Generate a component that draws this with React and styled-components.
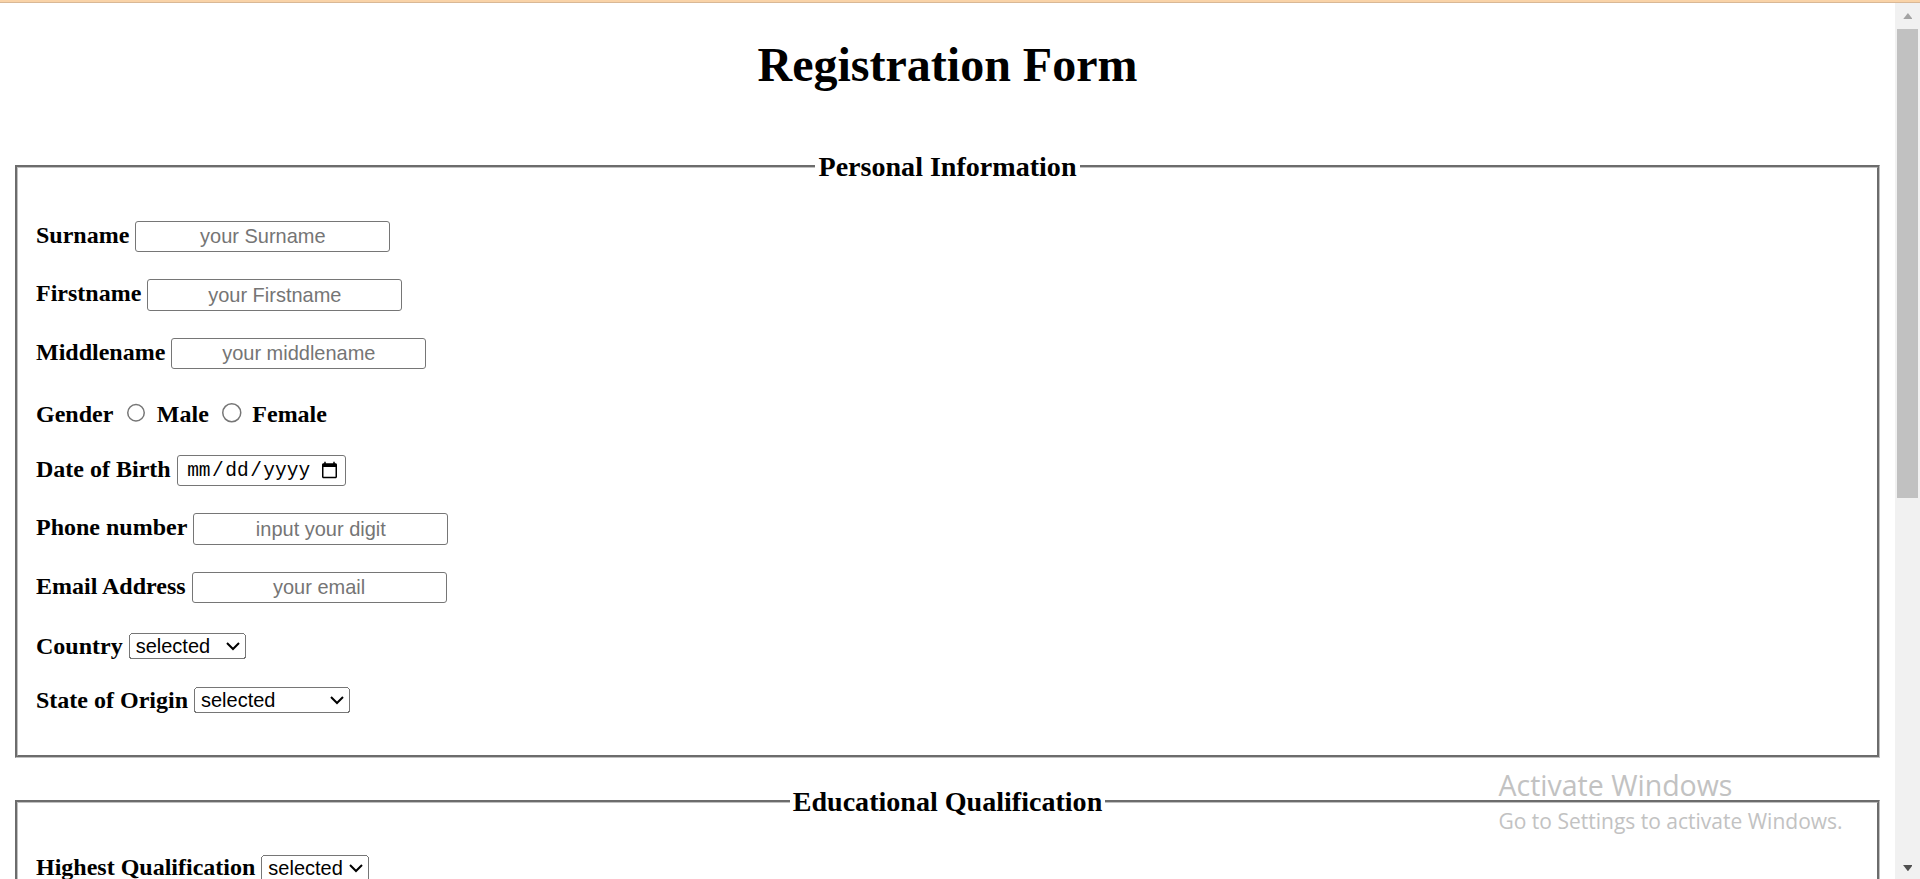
import styled, { createGlobalStyle } from "styled-components";

const GlobalStyle = createGlobalStyle`
  html, body {
    margin: 0;
    padding: 0;
    background: #ffffff;
    overflow: hidden;
  }
  body {
    font-family: "Liberation Serif", "Times New Roman", serif;
    color: #000000;
  }
`;

// the screenshot was taken at 150% browser zoom, so everything below is in 1x css px
const Screen = styled.div`
  zoom: 1.5;
  position: relative;
  width: 1280px;
  height: 586px;
  display: flex;
  flex-direction: column;
  overflow: hidden;
  background: #ffffff;
`;

const TopBar = styled.div`
  flex: none;
  height: 2px;
  background: linear-gradient(#f9d3a8 0 62%, #d9b896 62% 100%);
`;

const Viewport = styled.div`
  flex: 1;
  min-height: 0;
  display: flex;
`;

const Page = styled.div`
  flex: 1;
  min-width: 0;
  padding: 0 8px;
  overflow: hidden;
`;

const Title = styled.h1`
  margin: 22.7px 0 20.1px;
  font-size: 32px;
  line-height: 37px;
  font-weight: bold;
  text-align: center;
`;

const Section = styled.fieldset`
  margin: 0 2px;
  padding: 4.5px 12px 26.4px;
  border: 2px groove #c0c0c0;
`;

const Legend = styled.legend`
  margin: 0 auto;
  padding: 0 2px;
`;

const LegendTitle = styled.h3`
  margin: 18.75px 0;
  font-size: 18.72px;
  line-height: 21.5px;
  font-weight: bold;
`;

// $h - row height, $top - space above the row
const Row = styled.div`
  display: flex;
  align-items: center;
  gap: 4px;
  height: ${(p) => p.$h || 23}px;
  margin-top: ${(p) => p.$top ?? 16}px;
`;

const Label = styled.label`
  font-size: 16px;
  line-height: 18px;
  font-weight: bold;
  white-space: nowrap;
`;

const TextInput = styled.input`
  box-sizing: border-box;
  width: 170px;
  height: 21px;
  margin: 2px 0 0;
  padding: 1px 2px;
  border: 1px solid #767676;
  border-radius: 2px;
  background: #ffffff;
  font: 13.33px "Liberation Sans", Arial, sans-serif;
  color: #000000;
  text-align: center;

  &::placeholder {
    color: #757575;
  }
`;

const DateInput = styled(TextInput)`
  width: 113px;
  font: 13px "Liberation Mono", "DejaVu Sans Mono", monospace;
`;

const Radio = styled.input`
  width: 13px;
  height: 13px;
  margin: 0 3px 2px 5px;
`;

const Select = styled.select`
  width: ${(p) => p.$w}px;
  height: 17px;
  font: 13.33px "Liberation Sans", Arial, sans-serif;
  color: #000000;
`;

const ScrollBar = styled.div`
  flex: none;
  width: 16.67px;
  display: flex;
  flex-direction: column;
  background: #f1f1f1;
`;

const ScrollButton = styled.div`
  flex: none;
  height: 17.33px;
  display: flex;
  align-items: center;
  justify-content: center;
  padding-top: ${(p) => (p.$down ? 3 : 0)}px;
  box-sizing: border-box;
`;

const Track = styled.div`
  flex: 1;
  padding: 0 1.1px;
`;

const Thumb = styled.div`
  height: 312.7px;
  background: #c1c1c1;
`;

const Watermark = styled.div`
  position: absolute;
  left: 999px;
  top: 510.6px;
  font-family: "Open Sans", "Noto Sans", sans-serif;
  color: #c2c2c2;
  pointer-events: none;
`;

const WatermarkTitle = styled.div`
  font-size: 19px;
  line-height: 26px;
`;

const WatermarkText = styled.div`
  margin-top: 1.2px;
  font-size: 14px;
  line-height: 19px;
`;

function Arrow({ down, color }) {
  return (
    <svg width="6.6" height="4.2" viewBox="0 0 14 9">
      <polygon points={down ? "0,0 14,0 7,9" : "7,0 14,9 0,9"} fill={color} />
    </svg>
  );
}

function App() {
  return (
    <>
      <GlobalStyle />
      <Screen>
        <TopBar />
        <Viewport>
          <Page>
            <Title>Registration Form</Title>

            <Section>
              <Legend>
                <LegendTitle>Personal Information</LegendTitle>
              </Legend>
              <Row $top={0}>
                <Label>Surname</Label>
                <TextInput type="text" placeholder="your Surname" />
              </Row>
              <Row>
                <Label>Firstname</Label>
                <TextInput type="text" placeholder="your Firstname" />
              </Row>
              <Row>
                <Label>Middlename</Label>
                <TextInput type="text" placeholder="your middlename" />
              </Row>
              <Row $top={18.4}>
                <Label>Gender</Label>
                <Radio type="radio" name="gender" value="male" />
                <Label>Male</Label>
                <Radio type="radio" name="gender" value="female" />
                <Label>Female</Label>
              </Row>
              <Row $top={13.6}>
                <Label>Date of Birth</Label>
                <DateInput type="date" />
              </Row>
              <Row>
                <Label>Phone number</Label>
                <TextInput type="tel" placeholder="input your digit" />
              </Row>
              <Row>
                <Label>Email Address</Label>
                <TextInput type="email" placeholder="your email" />
              </Row>
              <Row $h={20} $top={18.4}>
                <Label>Country</Label>
                <Select $w={78} defaultValue="">
                  <option value="">selected</option>
                  <option>Nigeria</option>
                  <option>Ghana</option>
                </Select>
              </Row>
              <Row $h={20}>
                <Label>State of Origin</Label>
                <Select $w={104} defaultValue="">
                  <option value="">selected</option>
                  <option>Lagos</option>
                  <option>Ogun</option>
                </Select>
              </Row>
            </Section>

            <Section>
              <Legend>
                <LegendTitle>Educational Qualification</LegendTitle>
              </Legend>
              <Row $h={20} $top={0}>
                <Label>Highest Qualification</Label>
                <Select $w={72} defaultValue="">
                  <option value="">selected</option>
                  <option>SSCE</option>
                  <option>OND</option>
                  <option>HND</option>
                  <option>BSc</option>
                </Select>
              </Row>
            </Section>
          </Page>

          <ScrollBar>
            <ScrollButton>
              <Arrow color="#a3a3a3" />
            </ScrollButton>
            <Track>
              <Thumb />
            </Track>
            <ScrollButton $down>
              <Arrow down color="#505050" />
            </ScrollButton>
          </ScrollBar>
        </Viewport>

        <Watermark>
          <WatermarkTitle>Activate Windows</WatermarkTitle>
          <WatermarkText>Go to Settings to activate Windows.</WatermarkText>
        </Watermark>
      </Screen>
    </>
  );
}

export default App;
